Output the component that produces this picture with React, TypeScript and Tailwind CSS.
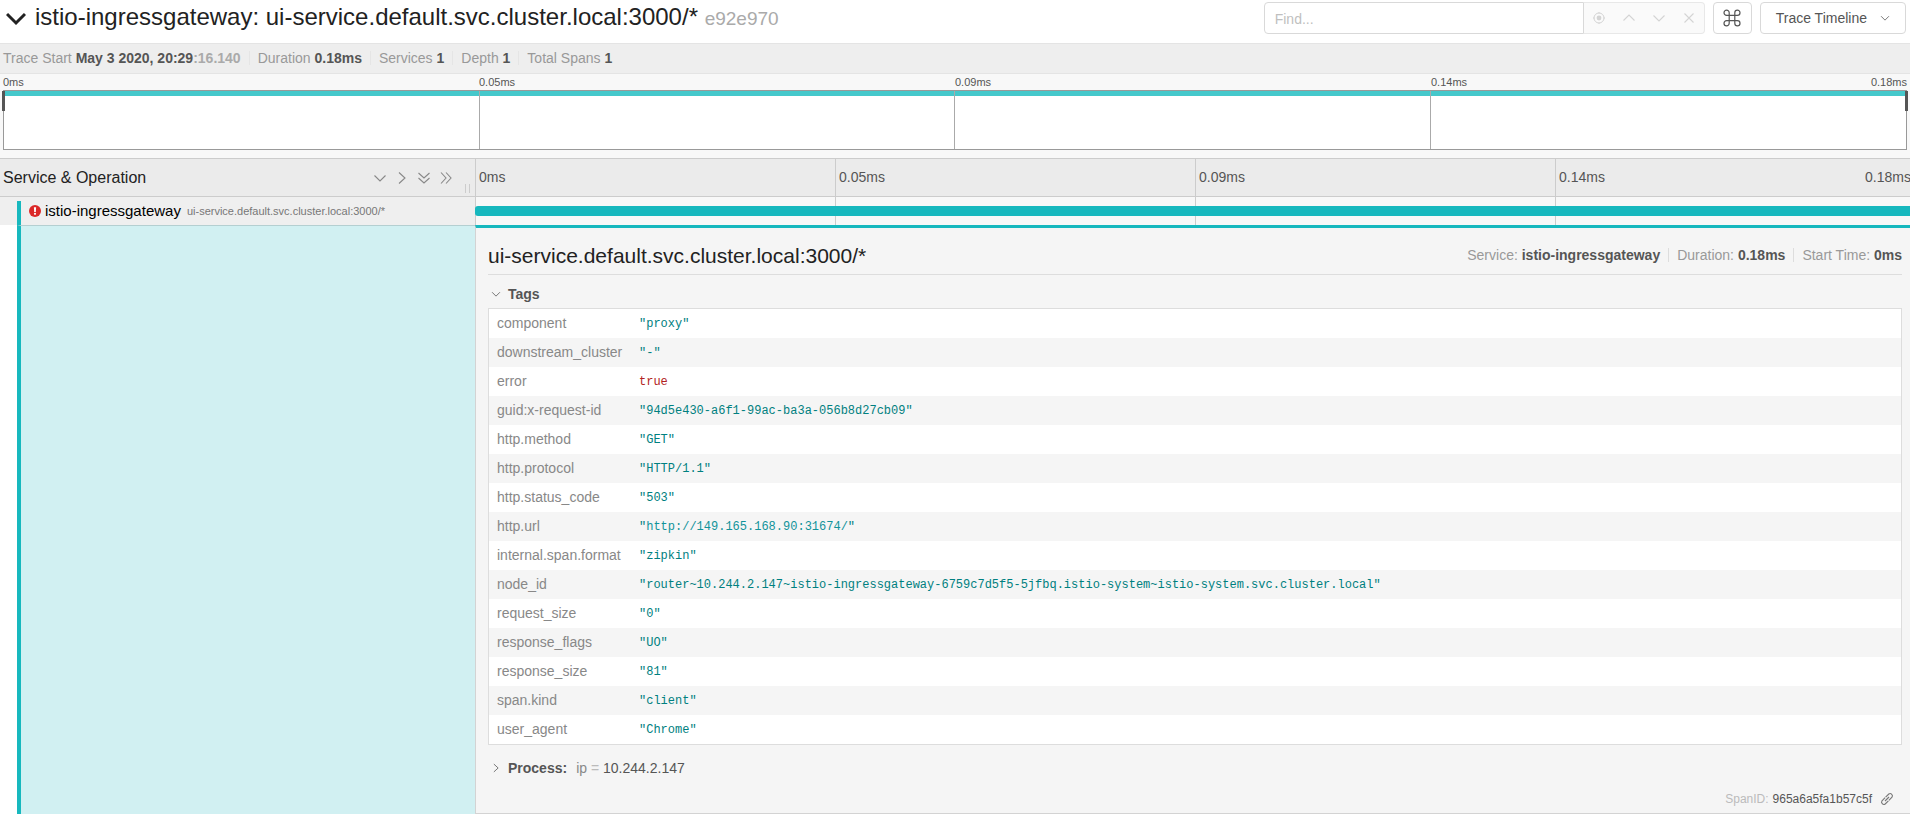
import React from "react";

const tags: { key: string; value: string; kind?: "bool" | "link" }[] = [
  { key: "component", value: "proxy" },
  { key: "downstream_cluster", value: "-" },
  { key: "error", value: "true", kind: "bool" },
  { key: "guid:x-request-id", value: "94d5e430-a6f1-99ac-ba3a-056b8d27cb09" },
  { key: "http.method", value: "GET" },
  { key: "http.protocol", value: "HTTP/1.1" },
  { key: "http.status_code", value: "503" },
  { key: "http.url", value: "http://149.165.168.90:31674/", kind: "link" },
  { key: "internal.span.format", value: "zipkin" },
  {
    key: "node_id",
    value:
      "router~10.244.2.147~istio-ingressgateway-6759c7d5f5-5jfbq.istio-system~istio-system.svc.cluster.local",
  },
  { key: "request_size", value: "0" },
  { key: "response_flags", value: "UO" },
  { key: "response_size", value: "81" },
  { key: "span.kind", value: "client" },
  { key: "user_agent", value: "Chrome" },
];

const ticks = ["0ms", "0.05ms", "0.09ms", "0.14ms"];

const iconPaths = {
  up: "M1.5 9.5L7 4l5.5 5.5",
  down: "M1.5 4.5L7 10l5.5-5.5",
  right: "M4 1.5L10 7l-6 5.5",
  doubleDown: "M1.5 2L7 7l5.5-5M1.5 7L7 12l5.5-5",
  doubleRight: "M2 1.5L7 7l-5 5.5M7 1.5L12 7l-5 5.5",
  close: "M2.5 2.5l9 9M11.5 2.5l-9 9",
  link: "M5.6 5.2l3.2-3.2a2.3 2.3 0 0 1 3.2 3.2L8.9 8.4M8.4 8.8l-3.2 3.2a2.3 2.3 0 0 1-3.2-3.2l3.1-3.2M5 9l4-4",
};

function Icon({ name, className = "size-[14px]" }: { name: keyof typeof iconPaths; className?: string }) {
  return (
    <svg viewBox="0 0 14 14" className={className} fill="none" stroke="currentColor" strokeWidth="1.1">
      <path d={iconPaths[name]} />
    </svg>
  );
}

function TagValue({ value, kind }: { value: string; kind?: "bool" | "link" }) {
  if (kind === "bool") return <span className="text-[#b22222]">{value}</span>;
  if (kind === "link")
    return (
      <span className="text-[#008080]">
        "<a href={value} className="text-[#11939a]">{value}</a>"
      </span>
    );
  return <span className="text-[#008080]">"{value}"</span>;
}

function TargetIcon() {
  return (
    <svg viewBox="0 0 14 14" className="size-[14px]" fill="none" stroke="currentColor" strokeWidth="1">
      <circle cx="7" cy="7" r="5" />
      <circle cx="7" cy="7" r="2.4" fill="currentColor" stroke="none" />
      <path d="M7 1v1.500M7 11.500V13M1 7h1.500M11.500 7H13" />
    </svg>
  );
}

function ErrorIcon() {
  return (
    <svg viewBox="0 0 12 12" className="size-3 shrink-0">
      <circle cx="6" cy="6" r="6" fill="#db2828" />
      <path d="M4.9 2.2h2.2L6.8 7H5.2z" fill="#fff" />
      <circle cx="6" cy="8.8" r="1.1" fill="#fff" />
    </svg>
  );
}

function Header() {
  const navButton = "flex w-[30px] items-center justify-center";
  return (
    <header className="flex h-[43px] items-start bg-white pr-1">
      <button className="flex h-9 min-w-0 flex-1 items-center text-left">
        <svg viewBox="0 0 20 16" className="mx-[6px] h-4 w-5 shrink-0" fill="none" stroke="#222" strokeWidth="3">
          <path d="M1 4l9 9 9-9" />
        </svg>
        <h1 className="ml-[3px] text-[24px] leading-9 text-[#222]">
          istio-ingressgateway: ui-service.default.svc.cluster.local:3000/*{" "}
          <small className="text-[19px] text-[#aaa]">e92e970</small>
        </h1>
      </button>
      <div className="mt-[2px] flex h-8">
        <input
          aria-label="Find"
          placeholder="Find..."
          className="w-[320px] rounded-l border border-[#d9d9d9] px-[10px] pt-[2px] text-[14px] text-[#555] outline-none placeholder:text-[#bfbfbf]"
        />
        <div className="flex rounded-r border border-l-0 border-[#e8e8e8] bg-[#fafafa] text-[#d4d4d4]">
          <button aria-label="Locate" className={navButton}><TargetIcon /></button>
          <button aria-label="Previous" className={navButton}><Icon name="up" /></button>
          <button aria-label="Next" className={navButton}><Icon name="down" /></button>
          <button aria-label="Clear" className={navButton}><Icon name="close" /></button>
        </div>
        <button aria-label="Keyboard shortcuts" className="ml-2 flex w-[39px] items-center justify-center rounded border border-[#d9d9d9] text-[#555]">
          <svg viewBox="0 0 18 18" className="size-[18px]" fill="none" stroke="currentColor" strokeWidth="1.2">
            <path d="M6.2 3.700a2.600 2.600 0 1 0-2.600 2.600h10.800a2.600 2.600 0 1 0-2.600-2.600v10.600a2.600 2.600 0 1 0 2.600-2.600H3.600a2.600 2.600 0 1 0 2.600 2.600z" />
          </svg>
        </button>
        <button className="ml-2 flex items-center rounded border border-[#d9d9d9] px-[15px] text-[14px] text-[#555]">
          Trace Timeline
          <Icon name="down" className="ml-[13px] size-[10px]" />
        </button>
      </div>
    </header>
  );
}

function Overview() {
  const item = "border-l border-[#e5e5e5] pl-2 ml-2";
  const strong = "font-bold text-[#555]";
  return (
    <div className="flex h-[31px] items-center border-y border-[#e4e4e4] bg-[#eee] pb-px pl-[3px] text-[14px] leading-[14px] text-[#999]">
      <div>
        Trace Start <b className={strong}>May 3 2020, 20:29<span className="text-[#aaa]">:16.140</span></b>
      </div>
      <div className={item}>Duration <b className={strong}>0.18ms</b></div>
      <div className={item}>Services <b className={strong}>1</b></div>
      <div className={item}>Depth <b className={strong}>1</b></div>
      <div className={item}>Total Spans <b className={strong}>1</b></div>
    </div>
  );
}

function Minimap() {
  return (
    <div className="bg-[#f8f8f8] px-[3px] pb-2">
      <div className="grid h-4 grid-cols-4 text-[11px] leading-4 text-[#555]">
        {ticks.map((t, i) => (
          <div key={t} className="flex justify-between">
            <span>{t}</span>
            {i === 3 && <span>0.18ms</span>}
          </div>
        ))}
      </div>
      <div className="relative h-[60px] border border-[#999] bg-white">
        <div className="h-[5px] bg-[#45c8cb]" />
        <div className="absolute inset-0 grid grid-cols-4">
          {ticks.map((t, i) => (
            <div key={t} className={i < 3 ? "border-r border-[#aaa]" : ""} />
          ))}
        </div>
        <div className="absolute top-0 -left-[2px] h-5 w-[3px] bg-[#555]" />
        <div className="absolute top-0 -right-[2px] h-5 w-[3px] bg-[#555]" />
      </div>
    </div>
  );
}

function TimelineHeader() {
  return (
    <div className="flex h-[39px] border-y border-[#ccc] bg-[#ebebeb]">
      <div className="relative flex w-[475px] shrink-0 items-center pr-[22px] pl-[3px] text-[#888]">
        <h2 className="flex-1 text-[16px] text-[#222]">Service &amp; Operation</h2>
        <div className="flex gap-2">
          <button aria-label="Expand one" className="flex"><Icon name="down" /></button>
          <button aria-label="Collapse one" className="flex"><Icon name="right" /></button>
          <button aria-label="Expand all" className="flex"><Icon name="doubleDown" /></button>
          <button aria-label="Collapse all" className="flex"><Icon name="doubleRight" /></button>
        </div>
        <div className="absolute right-[5px] bottom-[3px] h-[9px] w-[5px] border-x border-[#ccc]" />
      </div>
      <div className="-mr-[5px] grid flex-1 grid-cols-4 text-[14px] text-[#555]">
        {ticks.map((t, i) => (
          <div key={t} className="flex items-center justify-between border-l border-[#ccc] pl-[3px]">
            <span>{t}</span>
            {i === 3 && <span className="pr-1">0.18ms</span>}
          </div>
        ))}
      </div>
    </div>
  );
}

function SpanRow() {
  return (
    <div className="flex h-7">
      <div className="flex w-[475px] shrink-0 bg-[#efefef] pl-[17px]">
        <div className="mt-1 flex flex-1 border-l-4 border-[#17b8be] pl-2">
          <button className="flex h-[19px] items-center">
            <ErrorIcon />
            <span className="ml-1 text-[15px] leading-[19px] text-black">istio-ingressgateway</span>
            <small className="ml-[6px] pt-px text-[11px] text-[#777]">ui-service.default.svc.cluster.local:3000/*</small>
          </button>
        </div>
      </div>
      <div className="relative -mr-[5px] grid flex-1 grid-cols-4 bg-[#f8f8f8]">
        {ticks.map((t) => (
          <div key={t} className="border-l border-[#ccc]" />
        ))}
        <div className="absolute inset-x-0 top-[9px] h-[10px] rounded-[3px] bg-[#17b8be]" />
      </div>
    </div>
  );
}

function SpanDetail() {
  const item = "border-l border-[#ddd] pl-2 ml-2";
  const strong = "font-bold text-[#555]";
  return (
    <div className="flex flex-1">
      <div className="flex w-[475px] shrink-0 pl-[17px]">
        <div className="flex-1 border-t border-l-4 border-t-[#b4cfd1] border-l-[#17b8be] bg-[#d1f0f2]" />
      </div>
      <section className="flex min-w-0 flex-1 flex-col border-t-[3px] border-b border-l border-t-[#17b8be] border-b-[#d3d3d3] border-l-[#d3d3d3] bg-[#f5f5f5] px-3 pr-2">
        <div className="flex h-[47px] items-center justify-between border-b border-[#ddd] pt-2">
          <h2 className="pt-px text-[21px] leading-7 text-[#222]">ui-service.default.svc.cluster.local:3000/*</h2>
          <div className="flex text-[14px] leading-[14px] text-[#999]">
            <div>Service: <b className={strong}>istio-ingressgateway</b></div>
            <div className={item}>Duration: <b className={strong}>0.18ms</b></div>
            <div className={item}>Start Time: <b className={strong}>0ms</b></div>
          </div>
        </div>
        <button className="mt-[7px] flex h-6 items-center pl-[3px] text-[14px] font-bold text-[#555]">
          <Icon name="down" className="mr-[7px] size-[10px]" />
          Tags
        </button>
        <div className="mt-[2px] border border-[#ddd] bg-white">
          <table className="w-full border-collapse">
            <tbody>
              {tags.map((t) => (
                <tr key={t.key} className="h-[29px] even:bg-[#f5f5f5]">
                  <th scope="row" className="w-[142px] pb-px pl-2 text-left text-[14px] leading-5 font-normal whitespace-nowrap text-[#888]">
                    {t.key}
                  </th>
                  <td className="pt-px pl-2 font-['Liberation_Mono',monospace] text-[12px] leading-5">
                    <TagValue value={t.value} kind={t.kind} />
                  </td>
                </tr>
              ))}
            </tbody>
          </table>
        </div>
        <button className="mt-[11px] flex h-6 items-center pl-[3px] text-[14px] text-[#555]">
          <Icon name="right" className="mr-[7px] size-[10px]" />
          <b>Process:</b>
          <span className="ml-[9px] text-[#888]">
            ip <span className="text-[#bbb]">=</span> <span className="text-[#555]">10.244.2.147</span>
          </span>
        </button>
        <div className="mt-[9px] flex h-5 items-center justify-end pr-2 text-[12px] text-[#555]">
          <span className="mr-1 text-[#bbb]">SpanID:</span> 965a6a5fa1b57c5f
          <a href="#965a6a5fa1b57c5f" aria-label="Link to span" className="ml-2 text-[#777]"><Icon name="link" /></a>
        </div>
      </section>
    </div>
  );
}

export default function App() {
  return (
    <main className="flex min-h-screen flex-col overflow-hidden bg-white font-['Liberation_Sans',Arial,sans-serif]">
      <Header />
      <Overview />
      <Minimap />
      <TimelineHeader />
      <SpanRow />
      <SpanDetail />
    </main>
  );
}
